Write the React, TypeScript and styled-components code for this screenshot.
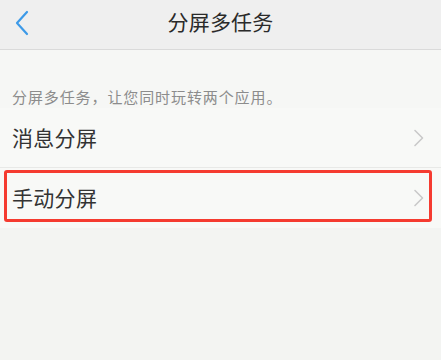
import React from "react";
import styled, { createGlobalStyle } from "styled-components";

const Global = createGlobalStyle`
  html, body { margin: 0; padding: 0; background: #f3f4f2; }
  body { font-family: "Noto Sans CJK SC", "Noto Sans", sans-serif; }
  * { box-sizing: border-box; }
`;

const Page = styled.div`
  width: 441px;
  height: 360px;
  background: #f3f4f2;
  display: flex;
  flex-direction: column;
  overflow: hidden;
`;

const Header = styled.header`
  height: 50px;
  flex: none;
  background: #efefef;
  border-bottom: 1px solid #dadada;
  display: grid;
  grid-template-columns: 60px 1fr 60px;
  align-items: center;
`;

const BackButton = styled.button`
  border: none;
  background: none;
  padding: 0 0 0 14px;
  height: 100%;
  display: flex;
  align-items: center;
  cursor: pointer;
  margin-top: -4px;
`;

const Title = styled.h1`
  margin: 0;
  text-align: center;
  font-size: 21px;
  font-weight: 400;
  color: #2a2a2a;
  margin-top: -8px;
  letter-spacing: 0.2px;
`;

const Description = styled.p`
  margin: 0;
  padding: 36px 12px 0;
  height: 58px;
  background: #f6f7f5;
  font-size: 15px;
  line-height: 22px;
  letter-spacing: 0.9px;
  color: #8c8c8c;
`;

const List = styled.div`
  display: flex;
  flex-direction: column;
  background: #f8f9f7;
`;

const RowWrap = styled.div`
  position: relative;
`;

const Row = styled.div<{ $divider?: boolean }>`
  height: 60px;
  display: flex;
  align-items: center;
  justify-content: space-between;
  padding: 0 16px 0 12px;
  border-bottom: ${(p) => (p.$divider ? "1px solid #e8e9e7" : "none")};
`;

const Label = styled.span`
  font-size: 21px;
  color: #333333;
  letter-spacing: 0.3px;
  margin-top: -2px;
`;

const Highlight = styled.div`
  position: absolute;
  left: 4px;
  right: 9px;
  top: 2px;
  height: 52px;
  border: 3px solid #f53b30;
  border-radius: 3px;
  pointer-events: none;
`;

const Chevron = () => (
  <svg width="12" height="18" viewBox="0 0 12 18" fill="none">
    <path d="M2 1.5 L9.5 9 L2 16.5" stroke="#c9c9c9" strokeWidth="1.6" strokeLinecap="round" strokeLinejoin="round" />
  </svg>
);

const BackIcon = () => (
  <svg width="16" height="26" viewBox="0 0 16 26" fill="none">
    <path d="M13 2 L3 13 L13 24" stroke="#3d9ae8" strokeWidth="2.2" strokeLinecap="round" strokeLinejoin="round" />
  </svg>
);

export default function App() {
  return (
    <>
      <Global />
      <Page>
        <Header>
          <BackButton aria-label="返回">
            <BackIcon />
          </BackButton>
          <Title>分屏多任务</Title>
          <span />
        </Header>
        <Description>分屏多任务，让您同时玩转两个应用。</Description>
        <List>
          <Row $divider>
            <Label>消息分屏</Label>
            <Chevron />
          </Row>
          <RowWrap>
            <Row>
              <Label>手动分屏</Label>
              <Chevron />
            </Row>
            <Highlight />
          </RowWrap>
        </List>
      </Page>
    </>
  );
}
